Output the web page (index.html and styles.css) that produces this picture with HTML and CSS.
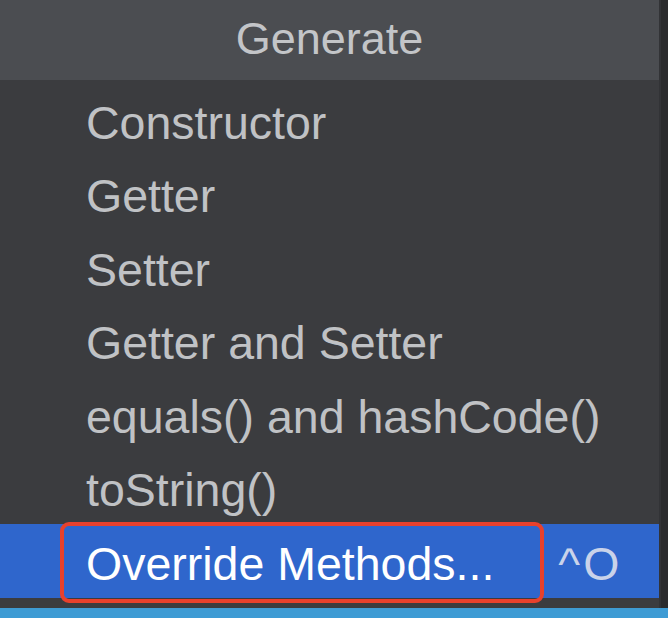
FILE: index.html
```html
<!DOCTYPE html>
<html>
<head>
<meta charset="utf-8">
<link rel="stylesheet" href="styles.css">
</head>
<body>
<div class="screen">
  <div class="top">
    <div class="panel">
      <div class="header">Generate</div>
      <ul class="list">
        <li class="item">Constructor</li>
        <li class="item">Getter</li>
        <li class="item">Setter</li>
        <li class="item">Getter and Setter</li>
        <li class="item">equals() and hashCode()</li>
        <li class="item">toString()</li>
        <li class="item selected">
          <span class="label">Override Methods...</span>
          <span class="shortcut">^O</span>
          <span class="annot"></span>
        </li>
      </ul>
    </div>
    <div class="side"></div>
  </div>
  <div class="bottom"></div>
</div>
</body>
</html>
```

FILE: styles.css
```css
* { box-sizing: border-box; }
html, body {
  margin: 0;
  padding: 0;
  width: 668px;
  height: 618px;
  overflow: hidden;
  background: #2b2c2e;
  font-family: "Liberation Sans", Arial, sans-serif;
}
.screen {
  display: flex;
  flex-direction: column;
  width: 668px;
  height: 618px;
}
.top {
  display: flex;
  flex: 1;
}
.panel {
  width: 659px;
  display: flex;
  flex-direction: column;
  background: #3b3c3f;
}
.side {
  flex: 1;
  background: #2a2b2d;
  border-left: 2px solid #323336;
}
.header {
  height: 80px;
  background: #4b4d51;
  color: #c3c5c8;
  font-size: 45px;
  display: flex;
  align-items: center;
  justify-content: center;
  padding-bottom: 2px;
}
.list {
  list-style: none;
  margin: 0;
  padding: 3px 0 0 0;
  flex: 1;
}
.item {
  height: 73.5px;
  display: flex;
  align-items: center;
  padding-left: 86px;
  padding-top: 6px;
  font-size: 46.5px;
  color: #c0c2c5;
}
.item.selected {
  position: relative;
  background: #2f66cc;
  color: #ffffff;
}
.label {
  flex: 0 0 auto;
}
.shortcut {
  margin-left: 64px;
  letter-spacing: 3px;
  color: #c9d3ea;
}
.annot {
  position: absolute;
  left: 60px;
  top: -2px;
  width: 484px;
  height: 81px;
  border: 4px solid #e8412c;
  border-radius: 9px;
}
.bottom {
  height: 10px;
  background: #3e9bd4;
}
```
